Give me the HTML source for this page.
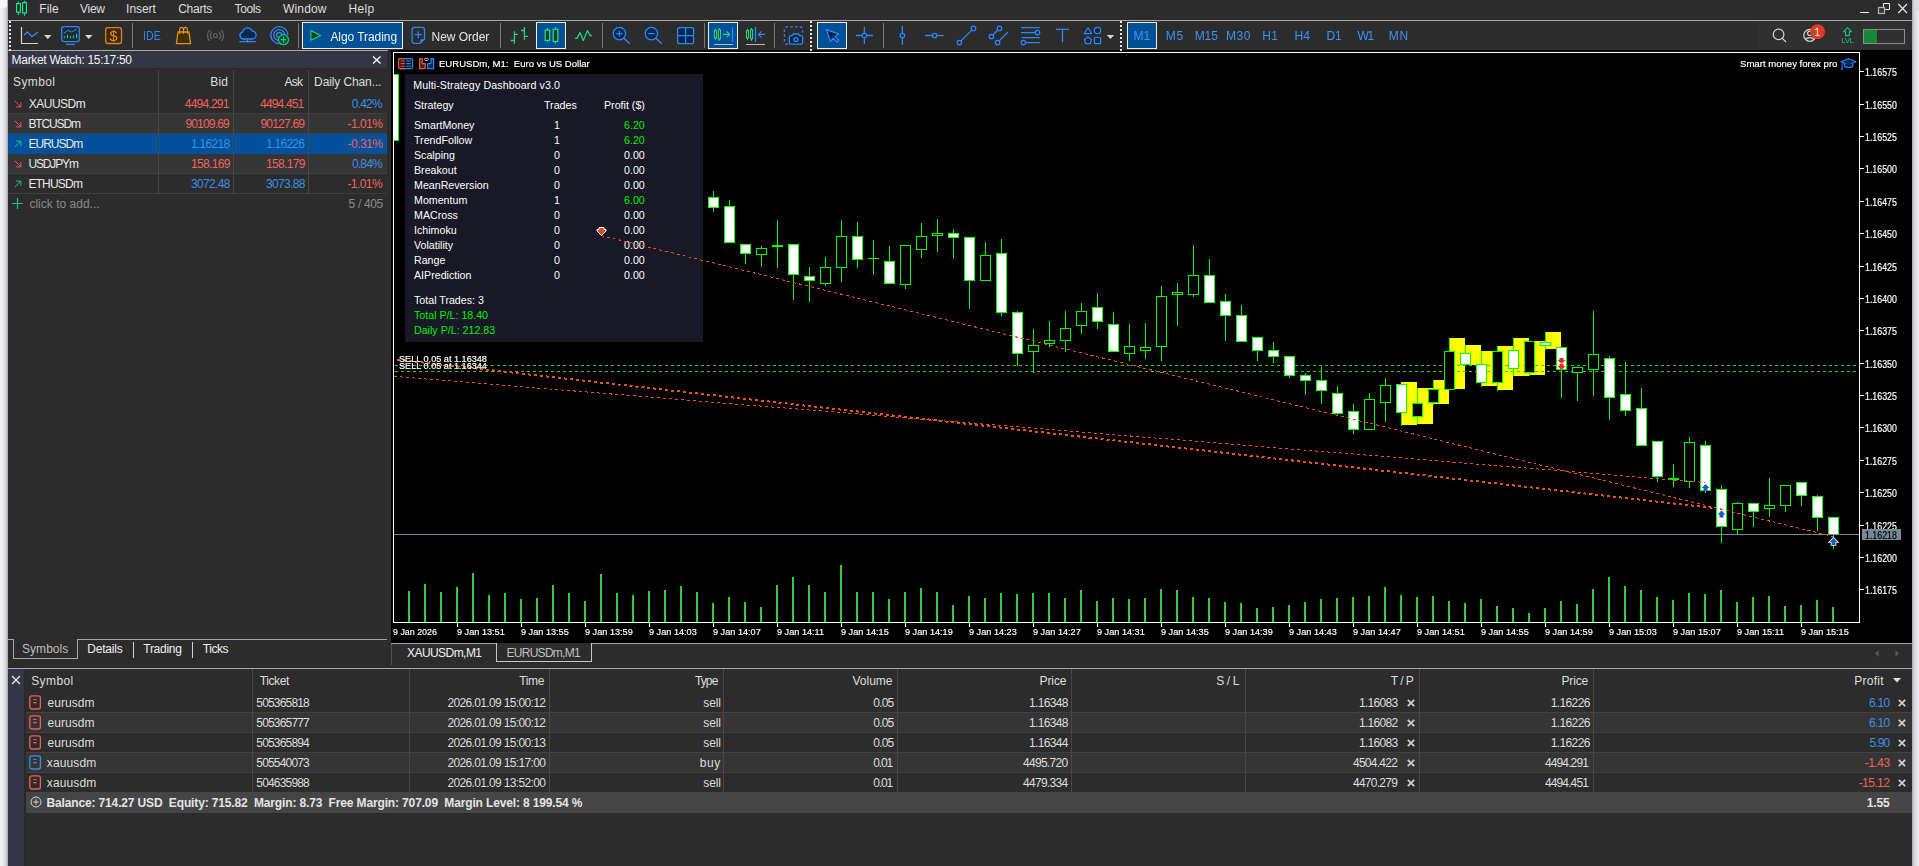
<!DOCTYPE html>
<html><head><meta charset="utf-8"><title>MetaTrader 5</title>
<style>
html,body{margin:0;padding:0;}
body{width:1919px;height:866px;overflow:hidden;position:relative;background:#2c2c2c;font-family:"Liberation Sans",sans-serif;}
svg{position:absolute;overflow:visible;}
</style></head><body>
<div style="position:absolute;left:0px;top:0px;width:8px;height:866px;background:linear-gradient(90deg,#f1f1f5 0%,#ececf0 35%,#d4d4d8 70%,#a9a9ad 100%);"></div>
<div style="position:absolute;left:0px;top:0px;width:7px;height:8px;background:#f6f6f8;border-radius:0 0 3px 0;"></div>
<div style="position:absolute;left:1912px;top:0px;width:7px;height:866px;background:linear-gradient(90deg,#aeaeb2 0%,#d6d6da 35%,#e6e6ea 70%,#ececf0 100%);"></div>
<div style="position:absolute;left:1914px;top:0px;width:5px;height:11px;background:#dcdce0;"></div>
<div style="position:absolute;left:1759px;top:21px;width:153px;height:29px;background:#303030;"></div>
<div style="position:absolute;left:8px;top:20px;width:1904px;height:1px;background:#a8a8a8;"></div>
<div style="position:absolute;top:2.94px;font-size:12px;line-height:12px;color:#dedede;white-space:pre;left:39.3px;">File</div>
<div style="position:absolute;top:2.94px;font-size:12px;line-height:12px;color:#dedede;white-space:pre;letter-spacing:-0.267px;left:80.0px;">View</div>
<div style="position:absolute;top:2.94px;font-size:12px;line-height:12px;color:#dedede;white-space:pre;letter-spacing:-0.04px;left:126.1px;">Insert</div>
<div style="position:absolute;top:2.94px;font-size:12px;line-height:12px;color:#dedede;white-space:pre;letter-spacing:-0.24px;left:178.2px;">Charts</div>
<div style="position:absolute;top:2.94px;font-size:12px;line-height:12px;color:#dedede;white-space:pre;letter-spacing:-0.375px;left:234.5px;">Tools</div>
<div style="position:absolute;top:2.94px;font-size:12px;line-height:12px;color:#dedede;white-space:pre;letter-spacing:0.16px;left:283.0px;">Window</div>
<div style="position:absolute;top:2.94px;font-size:12px;line-height:12px;color:#dedede;white-space:pre;letter-spacing:0.333px;left:348.5px;">Help</div>
<div style="position:absolute;left:8px;top:50px;width:380px;height:1px;background:#a8a8a8;"></div>
<div style="position:absolute;left:8px;top:51px;width:379px;height:17px;background:#333644;"></div>
<div style="position:absolute;top:53.74px;font-size:12px;line-height:12px;color:#f4f4f4;white-space:pre;letter-spacing:-0.314px;left:11.6px;">Market Watch: 15:17:50</div>
<div style="position:absolute;top:76.24px;font-size:12px;line-height:12px;color:#dedede;white-space:pre;letter-spacing:0.4px;left:13.0px;">Symbol</div>
<div style="position:absolute;top:76.24px;font-size:12px;line-height:12px;color:#dedede;white-space:pre;letter-spacing:0.125px;left:210.25px;">Bid</div>
<div style="position:absolute;top:76.24px;font-size:12px;line-height:12px;color:#dedede;white-space:pre;letter-spacing:-0.8px;left:284.5px;">Ask</div>
<div style="position:absolute;top:76.24px;font-size:12px;line-height:12px;color:#dedede;white-space:pre;letter-spacing:-0.113px;left:314.1px;">Daily Chan...</div>
<div style="position:absolute;left:8px;top:113px;width:379px;height:1px;background:#3f3f3f;"></div>
<div style="position:absolute;top:98.24px;font-size:12px;line-height:12px;color:#e8e8e8;white-space:pre;letter-spacing:-0.5px;left:28.75px;">XAUUSDm</div>
<div style="position:absolute;top:98.24px;font-size:12px;line-height:12px;color:#f0625d;white-space:pre;letter-spacing:-0.764px;left:184.75px;">4494.291</div>
<div style="position:absolute;top:98.24px;font-size:12px;line-height:12px;color:#f0625d;white-space:pre;letter-spacing:-0.836px;left:260.1px;">4494.451</div>
<div style="position:absolute;top:98.24px;font-size:12px;line-height:12px;color:#3a8ee6;white-space:pre;letter-spacing:-0.787px;left:351.75px;">0.42%</div>
<svg style="left:14px;top:100px" width="8" height="8" viewBox="0 0 8 8"><path d="M0.9 0.9 L6.6 6.6 M2.2 6.9 H6.9 V2.2" fill="none" stroke="#ff4d5a" stroke-width="1"/></svg>
<div style="position:absolute;left:8px;top:114px;width:379px;height:20px;background:#353535;"></div>
<div style="position:absolute;left:8px;top:133px;width:379px;height:1px;background:#3f3f3f;"></div>
<div style="position:absolute;top:118.24px;font-size:12px;line-height:12px;color:#e8e8e8;white-space:pre;letter-spacing:-1.133px;left:28.4px;">BTCUSDm</div>
<div style="position:absolute;top:118.24px;font-size:12px;line-height:12px;color:#f0625d;white-space:pre;letter-spacing:-0.807px;left:185.4px;">90109.69</div>
<div style="position:absolute;top:118.24px;font-size:12px;line-height:12px;color:#f0625d;white-space:pre;letter-spacing:-0.786px;left:260.4px;">90127.69</div>
<div style="position:absolute;top:118.24px;font-size:12px;line-height:12px;color:#f0625d;white-space:pre;letter-spacing:-0.54px;left:347.6px;">-1.01%</div>
<svg style="left:14px;top:120px" width="8" height="8" viewBox="0 0 8 8"><path d="M0.9 0.9 L6.6 6.6 M2.2 6.9 H6.9 V2.2" fill="none" stroke="#ff4d5a" stroke-width="1"/></svg>
<div style="position:absolute;left:8px;top:134px;width:379px;height:20px;background:#00509a;"></div>
<div style="position:absolute;left:8px;top:153px;width:379px;height:1px;background:#00509a;"></div>
<div style="position:absolute;top:138.24px;font-size:12px;line-height:12px;color:#e8e8e8;white-space:pre;letter-spacing:-0.967px;left:28.4px;">EURUSDm</div>
<div style="position:absolute;top:138.24px;font-size:12px;line-height:12px;color:#3a8ee6;white-space:pre;letter-spacing:-0.692px;left:190.9px;">1.16218</div>
<div style="position:absolute;top:138.24px;font-size:12px;line-height:12px;color:#3a8ee6;white-space:pre;letter-spacing:-0.733px;left:266.0px;">1.16226</div>
<div style="position:absolute;top:138.24px;font-size:12px;line-height:12px;color:#f0625d;white-space:pre;letter-spacing:-0.54px;left:347.6px;">-0.31%</div>
<svg style="left:14px;top:140px" width="8" height="8" viewBox="0 0 8 8"><path d="M0.9 7.1 L6.6 1.4 M2.2 1.1 H6.9 V5.8" fill="none" stroke="#16c784" stroke-width="1"/></svg>
<div style="position:absolute;left:8px;top:154px;width:379px;height:20px;background:#353535;"></div>
<div style="position:absolute;left:8px;top:173px;width:379px;height:1px;background:#3f3f3f;"></div>
<div style="position:absolute;top:158.24px;font-size:12px;line-height:12px;color:#e8e8e8;white-space:pre;letter-spacing:-1.133px;left:28.4px;">USDJPYm</div>
<div style="position:absolute;top:158.24px;font-size:12px;line-height:12px;color:#f0625d;white-space:pre;letter-spacing:-0.667px;left:191.0px;">158.169</div>
<div style="position:absolute;top:158.24px;font-size:12px;line-height:12px;color:#f0625d;white-space:pre;letter-spacing:-0.667px;left:266.0px;">158.179</div>
<div style="position:absolute;top:158.24px;font-size:12px;line-height:12px;color:#3a8ee6;white-space:pre;letter-spacing:-0.85px;left:352.0px;">0.84%</div>
<svg style="left:14px;top:160px" width="8" height="8" viewBox="0 0 8 8"><path d="M0.9 0.9 L6.6 6.6 M2.2 6.9 H6.9 V2.2" fill="none" stroke="#ff4d5a" stroke-width="1"/></svg>
<div style="position:absolute;left:8px;top:193px;width:379px;height:1px;background:#3f3f3f;"></div>
<div style="position:absolute;top:178.24px;font-size:12px;line-height:12px;color:#e8e8e8;white-space:pre;letter-spacing:-0.8px;left:28.4px;">ETHUSDm</div>
<div style="position:absolute;top:178.24px;font-size:12px;line-height:12px;color:#3a8ee6;white-space:pre;letter-spacing:-0.667px;left:191.0px;">3072.48</div>
<div style="position:absolute;top:178.24px;font-size:12px;line-height:12px;color:#3a8ee6;white-space:pre;letter-spacing:-0.667px;left:266.0px;">3073.88</div>
<div style="position:absolute;top:178.24px;font-size:12px;line-height:12px;color:#f0625d;white-space:pre;letter-spacing:-0.56px;left:347.4px;">-1.01%</div>
<svg style="left:14px;top:180px" width="8" height="8" viewBox="0 0 8 8"><path d="M0.9 7.1 L6.6 1.4 M2.2 1.1 H6.9 V5.8" fill="none" stroke="#16c784" stroke-width="1"/></svg>
<div style="position:absolute;left:158px;top:70px;width:1px;height:124px;background:#474747;"></div>
<div style="position:absolute;left:233px;top:70px;width:1px;height:124px;background:#474747;"></div>
<div style="position:absolute;left:308px;top:70px;width:1px;height:124px;background:#474747;"></div>
<svg style="left:12px;top:198px" width="11" height="11" viewBox="0 0 11 11"><path d="M5.5 0 V11 M0 5.5 H11" stroke="#16c784" stroke-width="1.2"/></svg>
<div style="position:absolute;top:197.64px;font-size:12px;line-height:12px;color:#8a8a8a;white-space:pre;letter-spacing:0.014px;left:29.4px;">click to add...</div>
<div style="position:absolute;top:197.64px;font-size:12px;line-height:12px;color:#8a8a8a;white-space:pre;letter-spacing:-0.333px;left:348.6px;">5 / 405</div>
<div style="position:absolute;left:8px;top:639px;width:379px;height:1px;background:#a8a8a8;"></div>
<div style="position:absolute;left:13px;top:639px;width:65px;height:1px;background:#2c2c2c;"></div>
<div style="position:absolute;left:13px;top:639px;width:1px;height:20px;background:#a8a8a8;"></div>
<div style="position:absolute;left:77px;top:639px;width:1px;height:20px;background:#a8a8a8;"></div>
<div style="position:absolute;left:13px;top:658px;width:65px;height:1px;background:#a8a8a8;"></div>
<div style="position:absolute;top:642.84px;font-size:12px;line-height:12px;color:#bdbdbd;white-space:pre;letter-spacing:0.05px;left:22.0px;">Symbols</div>
<div style="position:absolute;top:642.84px;font-size:12px;line-height:12px;color:#f0f0f0;white-space:pre;letter-spacing:-0.2px;left:87.2px;">Details</div>
<div style="position:absolute;top:642.84px;font-size:12px;line-height:12px;color:#f0f0f0;white-space:pre;letter-spacing:-0.283px;left:143.3px;">Trading</div>
<div style="position:absolute;top:642.84px;font-size:12px;line-height:12px;color:#f0f0f0;white-space:pre;letter-spacing:-0.45px;left:202.8px;">Ticks</div>
<div style="position:absolute;left:133px;top:642px;width:1px;height:16px;background:#d0d0d0;"></div>
<div style="position:absolute;left:192px;top:642px;width:1px;height:16px;background:#d0d0d0;"></div>
<div style="position:absolute;left:391px;top:643px;width:1521px;height:1px;background:#a8a8a8;"></div>
<div style="position:absolute;left:391px;top:644px;width:1px;height:21px;background:#4e4e4e;"></div>
<div style="position:absolute;left:496px;top:643px;width:96px;height:1px;background:#2c2c2c;"></div>
<div style="position:absolute;left:496px;top:643px;width:1px;height:19px;background:#c8c8c8;"></div>
<div style="position:absolute;left:591px;top:643px;width:1px;height:19px;background:#c8c8c8;"></div>
<div style="position:absolute;left:496px;top:661px;width:96px;height:1px;background:#c8c8c8;"></div>
<div style="position:absolute;top:647.34px;font-size:12px;line-height:12px;color:#f2f2f2;white-space:pre;letter-spacing:-0.556px;left:407.0px;">XAUUSDm,M1</div>
<div style="position:absolute;top:646.64px;font-size:12px;line-height:12px;color:#c0c0c0;white-space:pre;letter-spacing:-0.722px;left:506.5px;">EURUSDm,M1</div>
<svg style="left:1873px;top:649px" width="30" height="9" viewBox="0 0 30 9"><path d="M5.5 1 L2 4.5 L5.5 8 Z M22.5 1 L26 4.5 L22.5 8 Z" fill="#5a5a5a"/></svg>
<div style="position:absolute;left:8px;top:668px;width:1904px;height:1px;background:#a8a8a8;"></div>
<div style="position:absolute;left:8px;top:669px;width:16px;height:197px;background:#333644;"></div>
<div style="position:absolute;left:24px;top:669px;width:2px;height:197px;background:#292929;"></div>
<svg style="left:11px;top:675px" width="10" height="10" viewBox="0 0 10 10"><path d="M1 1 L9 9 M9 1 L1 9" stroke="#f4f4f4" stroke-width="1.3"/></svg>
<div style="position:absolute;top:675.14px;font-size:12px;line-height:12px;color:#dedede;white-space:pre;letter-spacing:0.4px;left:31.2px;">Symbol</div>
<div style="position:absolute;top:675.14px;font-size:12px;line-height:12px;color:#dedede;white-space:pre;letter-spacing:-0.4px;left:259.7px;">Ticket</div>
<div style="position:absolute;top:675.14px;font-size:12px;line-height:12px;color:#dedede;white-space:pre;letter-spacing:-0.333px;left:519.2px;">Time</div>
<div style="position:absolute;top:675.14px;font-size:12px;line-height:12px;color:#dedede;white-space:pre;letter-spacing:-0.9px;left:695.0px;">Type</div>
<div style="position:absolute;top:675.14px;font-size:12px;line-height:12px;color:#dedede;white-space:pre;left:852.5px;">Volume</div>
<div style="position:absolute;top:675.14px;font-size:12px;line-height:12px;color:#dedede;white-space:pre;letter-spacing:-0.075px;left:1039.5px;">Price</div>
<div style="position:absolute;top:675.14px;font-size:12px;line-height:12px;color:#dedede;white-space:pre;letter-spacing:-0.375px;left:1216.2px;">S / L</div>
<div style="position:absolute;top:675.14px;font-size:12px;line-height:12px;color:#dedede;white-space:pre;letter-spacing:-0.525px;left:1390.8px;">T / P</div>
<div style="position:absolute;top:675.14px;font-size:12px;line-height:12px;color:#dedede;white-space:pre;letter-spacing:-0.175px;left:1561.5px;">Price</div>
<div style="position:absolute;top:675.14px;font-size:12px;line-height:12px;color:#dedede;white-space:pre;letter-spacing:0.24px;left:1854.3px;">Profit</div>
<svg style="left:1893px;top:678px" width="8" height="5" viewBox="0 0 8 5"><path d="M0 0 H8 L4 4.5 Z" fill="#e0e0e0"/></svg>
<div style="position:absolute;left:26px;top:712px;width:1886px;height:1px;background:#424242;"></div>
<svg style="left:29px;top:695px" width="13" height="15" viewBox="0 0 13 15"><rect x="0.8" y="0.8" width="10.6" height="13.2" rx="2" fill="none" stroke="#f25c5c" stroke-width="1.3"/><path d="M4.2 4.5 H7.6 M4.2 7.6 H7.6" stroke="#f25c5c" stroke-width="1.2"/></svg>
<div style="position:absolute;top:696.54px;font-size:12px;line-height:12px;color:#dedede;white-space:pre;letter-spacing:0.05px;left:47.5px;">eurusdm</div>
<div style="position:absolute;top:696.54px;font-size:12px;line-height:12px;color:#dedede;white-space:pre;letter-spacing:-0.825px;left:256.3px;">505365818</div>
<div style="position:absolute;top:696.54px;font-size:12px;line-height:12px;color:#dedede;white-space:pre;letter-spacing:-0.65px;left:447.5px;">2026.01.09 15:00:12</div>
<div style="position:absolute;top:696.54px;font-size:12px;line-height:12px;color:#dedede;white-space:pre;letter-spacing:-0.1px;left:703.3px;">sell</div>
<div style="position:absolute;top:696.54px;font-size:12px;line-height:12px;color:#dedede;white-space:pre;letter-spacing:-0.833px;left:873.3px;">0.05</div>
<div style="position:absolute;top:696.54px;font-size:12px;line-height:12px;color:#dedede;white-space:pre;letter-spacing:-0.667px;left:1029.0px;">1.16348</div>
<div style="position:absolute;top:696.54px;font-size:12px;line-height:12px;color:#dedede;white-space:pre;letter-spacing:-0.7px;left:1359.0px;">1.16083</div>
<svg style="left:1406.5px;top:698.5px" width="8" height="8" viewBox="0 0 8 8"><path d="M0.8 0.8 L7.2 7.2 M7.2 0.8 L0.8 7.2" stroke="#d2d2d2" stroke-width="1.7"/></svg>
<div style="position:absolute;top:696.54px;font-size:12px;line-height:12px;color:#dedede;white-space:pre;letter-spacing:-0.617px;left:1550.7px;">1.16226</div>
<div style="position:absolute;top:696.54px;font-size:12px;line-height:12px;color:#3a8ee6;white-space:pre;letter-spacing:-0.733px;left:1869.0px;">6.10</div>
<svg style="left:1898px;top:698.5px" width="8" height="8" viewBox="0 0 8 8"><path d="M0.8 0.8 L7.2 7.2 M7.2 0.8 L0.8 7.2" stroke="#d2d2d2" stroke-width="1.7"/></svg>
<div style="position:absolute;left:26px;top:713px;width:1886px;height:19px;background:#353535;"></div>
<div style="position:absolute;left:26px;top:732px;width:1886px;height:1px;background:#424242;"></div>
<svg style="left:29px;top:715px" width="13" height="15" viewBox="0 0 13 15"><rect x="0.8" y="0.8" width="10.6" height="13.2" rx="2" fill="none" stroke="#f25c5c" stroke-width="1.3"/><path d="M4.2 4.5 H7.6 M4.2 7.6 H7.6" stroke="#f25c5c" stroke-width="1.2"/></svg>
<div style="position:absolute;top:716.54px;font-size:12px;line-height:12px;color:#dedede;white-space:pre;letter-spacing:0.05px;left:47.5px;">eurusdm</div>
<div style="position:absolute;top:716.54px;font-size:12px;line-height:12px;color:#dedede;white-space:pre;letter-spacing:-0.825px;left:256.3px;">505365777</div>
<div style="position:absolute;top:716.54px;font-size:12px;line-height:12px;color:#dedede;white-space:pre;letter-spacing:-0.65px;left:447.5px;">2026.01.09 15:00:12</div>
<div style="position:absolute;top:716.54px;font-size:12px;line-height:12px;color:#dedede;white-space:pre;letter-spacing:-0.1px;left:703.3px;">sell</div>
<div style="position:absolute;top:716.54px;font-size:12px;line-height:12px;color:#dedede;white-space:pre;letter-spacing:-0.833px;left:873.3px;">0.05</div>
<div style="position:absolute;top:716.54px;font-size:12px;line-height:12px;color:#dedede;white-space:pre;letter-spacing:-0.667px;left:1029.0px;">1.16348</div>
<div style="position:absolute;top:716.54px;font-size:12px;line-height:12px;color:#dedede;white-space:pre;letter-spacing:-0.7px;left:1359.0px;">1.16082</div>
<svg style="left:1406.5px;top:718.5px" width="8" height="8" viewBox="0 0 8 8"><path d="M0.8 0.8 L7.2 7.2 M7.2 0.8 L0.8 7.2" stroke="#d2d2d2" stroke-width="1.7"/></svg>
<div style="position:absolute;top:716.54px;font-size:12px;line-height:12px;color:#dedede;white-space:pre;letter-spacing:-0.617px;left:1550.7px;">1.16226</div>
<div style="position:absolute;top:716.54px;font-size:12px;line-height:12px;color:#3a8ee6;white-space:pre;letter-spacing:-0.733px;left:1869.0px;">6.10</div>
<svg style="left:1898px;top:718.5px" width="8" height="8" viewBox="0 0 8 8"><path d="M0.8 0.8 L7.2 7.2 M7.2 0.8 L0.8 7.2" stroke="#d2d2d2" stroke-width="1.7"/></svg>
<div style="position:absolute;left:26px;top:752px;width:1886px;height:1px;background:#424242;"></div>
<svg style="left:29px;top:735px" width="13" height="15" viewBox="0 0 13 15"><rect x="0.8" y="0.8" width="10.6" height="13.2" rx="2" fill="none" stroke="#f25c5c" stroke-width="1.3"/><path d="M4.2 4.5 H7.6 M4.2 7.6 H7.6" stroke="#f25c5c" stroke-width="1.2"/></svg>
<div style="position:absolute;top:736.54px;font-size:12px;line-height:12px;color:#dedede;white-space:pre;letter-spacing:0.05px;left:47.5px;">eurusdm</div>
<div style="position:absolute;top:736.54px;font-size:12px;line-height:12px;color:#dedede;white-space:pre;letter-spacing:-0.825px;left:256.3px;">505365894</div>
<div style="position:absolute;top:736.54px;font-size:12px;line-height:12px;color:#dedede;white-space:pre;letter-spacing:-0.65px;left:447.5px;">2026.01.09 15:00:13</div>
<div style="position:absolute;top:736.54px;font-size:12px;line-height:12px;color:#dedede;white-space:pre;letter-spacing:-0.1px;left:703.3px;">sell</div>
<div style="position:absolute;top:736.54px;font-size:12px;line-height:12px;color:#dedede;white-space:pre;letter-spacing:-0.833px;left:873.3px;">0.05</div>
<div style="position:absolute;top:736.54px;font-size:12px;line-height:12px;color:#dedede;white-space:pre;letter-spacing:-0.667px;left:1029.0px;">1.16344</div>
<div style="position:absolute;top:736.54px;font-size:12px;line-height:12px;color:#dedede;white-space:pre;letter-spacing:-0.7px;left:1359.0px;">1.16083</div>
<svg style="left:1406.5px;top:738.5px" width="8" height="8" viewBox="0 0 8 8"><path d="M0.8 0.8 L7.2 7.2 M7.2 0.8 L0.8 7.2" stroke="#d2d2d2" stroke-width="1.7"/></svg>
<div style="position:absolute;top:736.54px;font-size:12px;line-height:12px;color:#dedede;white-space:pre;letter-spacing:-0.617px;left:1550.7px;">1.16226</div>
<div style="position:absolute;top:736.54px;font-size:12px;line-height:12px;color:#3a8ee6;white-space:pre;letter-spacing:-0.9px;left:1869.5px;">5.90</div>
<svg style="left:1898px;top:738.5px" width="8" height="8" viewBox="0 0 8 8"><path d="M0.8 0.8 L7.2 7.2 M7.2 0.8 L0.8 7.2" stroke="#d2d2d2" stroke-width="1.7"/></svg>
<div style="position:absolute;left:26px;top:753px;width:1886px;height:19px;background:#353535;"></div>
<div style="position:absolute;left:26px;top:772px;width:1886px;height:1px;background:#424242;"></div>
<svg style="left:29px;top:755px" width="13" height="15" viewBox="0 0 13 15"><rect x="0.8" y="0.8" width="10.6" height="13.2" rx="2" fill="none" stroke="#3a8ee6" stroke-width="1.3"/><path d="M4.2 4.5 H7.6 M4.2 7.6 H7.6" stroke="#3a8ee6" stroke-width="1.2"/></svg>
<div style="position:absolute;top:756.54px;font-size:12px;line-height:12px;color:#dedede;white-space:pre;letter-spacing:0.117px;left:46.8px;">xauusdm</div>
<div style="position:absolute;top:756.54px;font-size:12px;line-height:12px;color:#dedede;white-space:pre;letter-spacing:-0.825px;left:256.3px;">505540073</div>
<div style="position:absolute;top:756.54px;font-size:12px;line-height:12px;color:#dedede;white-space:pre;letter-spacing:-0.65px;left:447.5px;">2026.01.09 15:17:00</div>
<div style="position:absolute;top:756.54px;font-size:12px;line-height:12px;color:#dedede;white-space:pre;letter-spacing:0.6px;left:699.8px;">buy</div>
<div style="position:absolute;top:756.54px;font-size:12px;line-height:12px;color:#dedede;white-space:pre;letter-spacing:-1.167px;left:873.3px;">0.01</div>
<div style="position:absolute;top:756.54px;font-size:12px;line-height:12px;color:#dedede;white-space:pre;letter-spacing:-0.714px;left:1023.0px;">4495.720</div>
<div style="position:absolute;top:756.54px;font-size:12px;line-height:12px;color:#dedede;white-space:pre;letter-spacing:-0.743px;left:1353.0px;">4504.422</div>
<svg style="left:1406.5px;top:758.5px" width="8" height="8" viewBox="0 0 8 8"><path d="M0.8 0.8 L7.2 7.2 M7.2 0.8 L0.8 7.2" stroke="#d2d2d2" stroke-width="1.7"/></svg>
<div style="position:absolute;top:756.54px;font-size:12px;line-height:12px;color:#dedede;white-space:pre;letter-spacing:-0.886px;left:1545.0px;">4494.291</div>
<div style="position:absolute;top:756.54px;font-size:12px;line-height:12px;color:#f0625d;white-space:pre;letter-spacing:-0.5px;left:1864.8px;">-1.43</div>
<svg style="left:1898px;top:758.5px" width="8" height="8" viewBox="0 0 8 8"><path d="M0.8 0.8 L7.2 7.2 M7.2 0.8 L0.8 7.2" stroke="#d2d2d2" stroke-width="1.7"/></svg>
<div style="position:absolute;left:26px;top:792px;width:1886px;height:1px;background:#424242;"></div>
<svg style="left:29px;top:775px" width="13" height="15" viewBox="0 0 13 15"><rect x="0.8" y="0.8" width="10.6" height="13.2" rx="2" fill="none" stroke="#f25c5c" stroke-width="1.3"/><path d="M4.2 4.5 H7.6 M4.2 7.6 H7.6" stroke="#f25c5c" stroke-width="1.2"/></svg>
<div style="position:absolute;top:776.54px;font-size:12px;line-height:12px;color:#dedede;white-space:pre;letter-spacing:0.117px;left:46.8px;">xauusdm</div>
<div style="position:absolute;top:776.54px;font-size:12px;line-height:12px;color:#dedede;white-space:pre;letter-spacing:-0.825px;left:256.3px;">504635988</div>
<div style="position:absolute;top:776.54px;font-size:12px;line-height:12px;color:#dedede;white-space:pre;letter-spacing:-0.65px;left:447.5px;">2026.01.09 13:52:00</div>
<div style="position:absolute;top:776.54px;font-size:12px;line-height:12px;color:#dedede;white-space:pre;letter-spacing:-0.1px;left:703.3px;">sell</div>
<div style="position:absolute;top:776.54px;font-size:12px;line-height:12px;color:#dedede;white-space:pre;letter-spacing:-1.167px;left:873.3px;">0.01</div>
<div style="position:absolute;top:776.54px;font-size:12px;line-height:12px;color:#dedede;white-space:pre;letter-spacing:-0.714px;left:1023.0px;">4479.334</div>
<div style="position:absolute;top:776.54px;font-size:12px;line-height:12px;color:#dedede;white-space:pre;letter-spacing:-0.743px;left:1353.0px;">4470.279</div>
<svg style="left:1406.5px;top:778.5px" width="8" height="8" viewBox="0 0 8 8"><path d="M0.8 0.8 L7.2 7.2 M7.2 0.8 L0.8 7.2" stroke="#d2d2d2" stroke-width="1.7"/></svg>
<div style="position:absolute;top:776.54px;font-size:12px;line-height:12px;color:#dedede;white-space:pre;letter-spacing:-0.886px;left:1545.0px;">4494.451</div>
<div style="position:absolute;top:776.54px;font-size:12px;line-height:12px;color:#f0625d;white-space:pre;letter-spacing:-0.58px;left:1858.7px;">-15.12</div>
<svg style="left:1898px;top:778.5px" width="8" height="8" viewBox="0 0 8 8"><path d="M0.8 0.8 L7.2 7.2 M7.2 0.8 L0.8 7.2" stroke="#d2d2d2" stroke-width="1.7"/></svg>
<div style="position:absolute;left:252px;top:669px;width:1px;height:123px;background:#474747;"></div>
<div style="position:absolute;left:409px;top:669px;width:1px;height:123px;background:#474747;"></div>
<div style="position:absolute;left:549px;top:669px;width:1px;height:123px;background:#474747;"></div>
<div style="position:absolute;left:723px;top:669px;width:1px;height:123px;background:#474747;"></div>
<div style="position:absolute;left:897px;top:669px;width:1px;height:123px;background:#474747;"></div>
<div style="position:absolute;left:1071px;top:669px;width:1px;height:123px;background:#474747;"></div>
<div style="position:absolute;left:1245px;top:669px;width:1px;height:123px;background:#474747;"></div>
<div style="position:absolute;left:1419px;top:669px;width:1px;height:123px;background:#474747;"></div>
<div style="position:absolute;left:1593px;top:669px;width:1px;height:123px;background:#474747;"></div>
<div style="position:absolute;left:26px;top:792px;width:1886px;height:21px;background:#454545;"></div>
<svg style="left:29.6px;top:796.4px" width="12" height="12" viewBox="0 0 12 12"><circle cx="6" cy="6" r="5" fill="none" stroke="#d8d8d8" stroke-width="1"/><path d="M6 3.3 V8.7 M3.3 6 H8.7" stroke="#d8d8d8" stroke-width="1"/></svg>
<div style="position:absolute;top:796.84px;font-size:12px;line-height:12px;color:#e4e4e4;white-space:pre;font-weight:bold;letter-spacing:-0.144px;left:46.5px;">Balance: 714.27 USD  Equity: 715.82  Margin: 8.73  Free Margin: 707.09  Margin Level: 8 199.54 %</div>
<div style="position:absolute;top:796.84px;font-size:12px;line-height:12px;color:#e4e4e4;white-space:pre;font-weight:bold;letter-spacing:-0.167px;left:1866.8px;">1.55</div>
<div style="position:absolute;left:0;top:0;width:1919px;height:866px;will-change:transform;-webkit-text-stroke:0.18px currentColor">
<div style="position:absolute;left:391px;top:50px;width:1521px;height:593px;background:#000;"></div>
<div style="position:absolute;top:67.97px;font-size:10.2px;line-height:10.2px;color:#fff;white-space:pre;left:1864.93px;transform:scaleX(0.8667);transform-origin:0 0;">1.16575</div>
<div style="position:absolute;top:100.97px;font-size:10.2px;line-height:10.2px;color:#fff;white-space:pre;left:1864.93px;transform:scaleX(0.8667);transform-origin:0 0;">1.16550</div>
<div style="position:absolute;top:132.97px;font-size:10.2px;line-height:10.2px;color:#fff;white-space:pre;left:1864.93px;transform:scaleX(0.8667);transform-origin:0 0;">1.16525</div>
<div style="position:absolute;top:164.97px;font-size:10.2px;line-height:10.2px;color:#fff;white-space:pre;left:1864.93px;transform:scaleX(0.8667);transform-origin:0 0;">1.16500</div>
<div style="position:absolute;top:197.97px;font-size:10.2px;line-height:10.2px;color:#fff;white-space:pre;left:1864.93px;transform:scaleX(0.8667);transform-origin:0 0;">1.16475</div>
<div style="position:absolute;top:229.97px;font-size:10.2px;line-height:10.2px;color:#fff;white-space:pre;left:1864.93px;transform:scaleX(0.8667);transform-origin:0 0;">1.16450</div>
<div style="position:absolute;top:262.97px;font-size:10.2px;line-height:10.2px;color:#fff;white-space:pre;left:1864.93px;transform:scaleX(0.8667);transform-origin:0 0;">1.16425</div>
<div style="position:absolute;top:294.97px;font-size:10.2px;line-height:10.2px;color:#fff;white-space:pre;left:1864.93px;transform:scaleX(0.8667);transform-origin:0 0;">1.16400</div>
<div style="position:absolute;top:326.97px;font-size:10.2px;line-height:10.2px;color:#fff;white-space:pre;left:1864.93px;transform:scaleX(0.8667);transform-origin:0 0;">1.16375</div>
<div style="position:absolute;top:359.97px;font-size:10.2px;line-height:10.2px;color:#fff;white-space:pre;left:1864.93px;transform:scaleX(0.8667);transform-origin:0 0;">1.16350</div>
<div style="position:absolute;top:391.97px;font-size:10.2px;line-height:10.2px;color:#fff;white-space:pre;left:1864.93px;transform:scaleX(0.8667);transform-origin:0 0;">1.16325</div>
<div style="position:absolute;top:423.97px;font-size:10.2px;line-height:10.2px;color:#fff;white-space:pre;left:1864.93px;transform:scaleX(0.8667);transform-origin:0 0;">1.16300</div>
<div style="position:absolute;top:456.97px;font-size:10.2px;line-height:10.2px;color:#fff;white-space:pre;left:1864.93px;transform:scaleX(0.8667);transform-origin:0 0;">1.16275</div>
<div style="position:absolute;top:488.97px;font-size:10.2px;line-height:10.2px;color:#fff;white-space:pre;left:1864.93px;transform:scaleX(0.8667);transform-origin:0 0;">1.16250</div>
<div style="position:absolute;top:521.97px;font-size:10.2px;line-height:10.2px;color:#fff;white-space:pre;left:1864.93px;transform:scaleX(0.8667);transform-origin:0 0;">1.16225</div>
<div style="position:absolute;top:553.97px;font-size:10.2px;line-height:10.2px;color:#fff;white-space:pre;left:1864.93px;transform:scaleX(0.8667);transform-origin:0 0;">1.16200</div>
<div style="position:absolute;top:585.97px;font-size:10.2px;line-height:10.2px;color:#fff;white-space:pre;left:1864.93px;transform:scaleX(0.8667);transform-origin:0 0;">1.16175</div>
<div style="position:absolute;top:626.72px;font-size:9.9px;line-height:9.9px;color:#fff;white-space:pre;left:393.0px;transform:scaleX(0.898);transform-origin:0 0;">9 Jan 2026</div>
<div style="position:absolute;top:626.72px;font-size:9.9px;line-height:9.9px;color:#fff;white-space:pre;left:457.0px;transform:scaleX(0.9255);transform-origin:0 0;">9 Jan 13:51</div>
<div style="position:absolute;top:626.72px;font-size:9.9px;line-height:9.9px;color:#fff;white-space:pre;left:521.0px;transform:scaleX(0.9255);transform-origin:0 0;">9 Jan 13:55</div>
<div style="position:absolute;top:626.72px;font-size:9.9px;line-height:9.9px;color:#fff;white-space:pre;left:585.0px;transform:scaleX(0.9255);transform-origin:0 0;">9 Jan 13:59</div>
<div style="position:absolute;top:626.72px;font-size:9.9px;line-height:9.9px;color:#fff;white-space:pre;left:649.0px;transform:scaleX(0.9255);transform-origin:0 0;">9 Jan 14:03</div>
<div style="position:absolute;top:626.72px;font-size:9.9px;line-height:9.9px;color:#fff;white-space:pre;left:713.0px;transform:scaleX(0.9255);transform-origin:0 0;">9 Jan 14:07</div>
<div style="position:absolute;top:626.72px;font-size:9.9px;line-height:9.9px;color:#fff;white-space:pre;left:777.0px;transform:scaleX(0.9255);transform-origin:0 0;">9 Jan 14:11</div>
<div style="position:absolute;top:626.72px;font-size:9.9px;line-height:9.9px;color:#fff;white-space:pre;left:841.0px;transform:scaleX(0.9255);transform-origin:0 0;">9 Jan 14:15</div>
<div style="position:absolute;top:626.72px;font-size:9.9px;line-height:9.9px;color:#fff;white-space:pre;left:905.0px;transform:scaleX(0.9255);transform-origin:0 0;">9 Jan 14:19</div>
<div style="position:absolute;top:626.72px;font-size:9.9px;line-height:9.9px;color:#fff;white-space:pre;left:969.0px;transform:scaleX(0.9255);transform-origin:0 0;">9 Jan 14:23</div>
<div style="position:absolute;top:626.72px;font-size:9.9px;line-height:9.9px;color:#fff;white-space:pre;left:1033.0px;transform:scaleX(0.9255);transform-origin:0 0;">9 Jan 14:27</div>
<div style="position:absolute;top:626.72px;font-size:9.9px;line-height:9.9px;color:#fff;white-space:pre;left:1097.0px;transform:scaleX(0.9255);transform-origin:0 0;">9 Jan 14:31</div>
<div style="position:absolute;top:626.72px;font-size:9.9px;line-height:9.9px;color:#fff;white-space:pre;left:1161.0px;transform:scaleX(0.9255);transform-origin:0 0;">9 Jan 14:35</div>
<div style="position:absolute;top:626.72px;font-size:9.9px;line-height:9.9px;color:#fff;white-space:pre;left:1225.0px;transform:scaleX(0.9255);transform-origin:0 0;">9 Jan 14:39</div>
<div style="position:absolute;top:626.72px;font-size:9.9px;line-height:9.9px;color:#fff;white-space:pre;left:1289.0px;transform:scaleX(0.9255);transform-origin:0 0;">9 Jan 14:43</div>
<div style="position:absolute;top:626.72px;font-size:9.9px;line-height:9.9px;color:#fff;white-space:pre;left:1353.0px;transform:scaleX(0.9255);transform-origin:0 0;">9 Jan 14:47</div>
<div style="position:absolute;top:626.72px;font-size:9.9px;line-height:9.9px;color:#fff;white-space:pre;left:1417.0px;transform:scaleX(0.9255);transform-origin:0 0;">9 Jan 14:51</div>
<div style="position:absolute;top:626.72px;font-size:9.9px;line-height:9.9px;color:#fff;white-space:pre;left:1481.0px;transform:scaleX(0.9255);transform-origin:0 0;">9 Jan 14:55</div>
<div style="position:absolute;top:626.72px;font-size:9.9px;line-height:9.9px;color:#fff;white-space:pre;left:1545.0px;transform:scaleX(0.9255);transform-origin:0 0;">9 Jan 14:59</div>
<div style="position:absolute;top:626.72px;font-size:9.9px;line-height:9.9px;color:#fff;white-space:pre;left:1609.0px;transform:scaleX(0.9255);transform-origin:0 0;">9 Jan 15:03</div>
<div style="position:absolute;top:626.72px;font-size:9.9px;line-height:9.9px;color:#fff;white-space:pre;left:1673.0px;transform:scaleX(0.9255);transform-origin:0 0;">9 Jan 15:07</div>
<div style="position:absolute;top:626.72px;font-size:9.9px;line-height:9.9px;color:#fff;white-space:pre;left:1737.0px;transform:scaleX(0.9255);transform-origin:0 0;">9 Jan 15:11</div>
<div style="position:absolute;top:626.72px;font-size:9.9px;line-height:9.9px;color:#fff;white-space:pre;left:1801.0px;transform:scaleX(0.9255);transform-origin:0 0;">9 Jan 15:15</div>
<svg style="left:0;top:0" width="1919" height="866" viewBox="0 0 1919 866" shape-rendering="crispEdges"><rect x="393" y="52" width="1467" height="1" fill="#fff"/><rect x="393" y="52" width="1" height="571" fill="#fff"/><rect x="393" y="622" width="1467" height="1" fill="#fff"/><rect x="1859" y="52" width="1" height="571" fill="#fff"/><rect x="1860" y="71" width="4" height="1" fill="#fff"/><rect x="1860" y="104" width="4" height="1" fill="#fff"/><rect x="1860" y="136" width="4" height="1" fill="#fff"/><rect x="1860" y="168" width="4" height="1" fill="#fff"/><rect x="1860" y="201" width="4" height="1" fill="#fff"/><rect x="1860" y="233" width="4" height="1" fill="#fff"/><rect x="1860" y="266" width="4" height="1" fill="#fff"/><rect x="1860" y="298" width="4" height="1" fill="#fff"/><rect x="1860" y="330" width="4" height="1" fill="#fff"/><rect x="1860" y="363" width="4" height="1" fill="#fff"/><rect x="1860" y="395" width="4" height="1" fill="#fff"/><rect x="1860" y="427" width="4" height="1" fill="#fff"/><rect x="1860" y="460" width="4" height="1" fill="#fff"/><rect x="1860" y="492" width="4" height="1" fill="#fff"/><rect x="1860" y="525" width="4" height="1" fill="#fff"/><rect x="1860" y="557" width="4" height="1" fill="#fff"/><rect x="1860" y="589" width="4" height="1" fill="#fff"/><rect x="457" y="623" width="1" height="4" fill="#fff"/><rect x="521" y="623" width="1" height="4" fill="#fff"/><rect x="585" y="623" width="1" height="4" fill="#fff"/><rect x="649" y="623" width="1" height="4" fill="#fff"/><rect x="713" y="623" width="1" height="4" fill="#fff"/><rect x="777" y="623" width="1" height="4" fill="#fff"/><rect x="841" y="623" width="1" height="4" fill="#fff"/><rect x="905" y="623" width="1" height="4" fill="#fff"/><rect x="969" y="623" width="1" height="4" fill="#fff"/><rect x="1033" y="623" width="1" height="4" fill="#fff"/><rect x="1097" y="623" width="1" height="4" fill="#fff"/><rect x="1161" y="623" width="1" height="4" fill="#fff"/><rect x="1225" y="623" width="1" height="4" fill="#fff"/><rect x="1289" y="623" width="1" height="4" fill="#fff"/><rect x="1353" y="623" width="1" height="4" fill="#fff"/><rect x="1417" y="623" width="1" height="4" fill="#fff"/><rect x="1481" y="623" width="1" height="4" fill="#fff"/><rect x="1545" y="623" width="1" height="4" fill="#fff"/><rect x="1609" y="623" width="1" height="4" fill="#fff"/><rect x="1673" y="623" width="1" height="4" fill="#fff"/><rect x="1737" y="623" width="1" height="4" fill="#fff"/><rect x="1801" y="623" width="1" height="4" fill="#fff"/><rect x="408" y="591" width="2" height="31" fill="#32cd32"/><rect x="424" y="584" width="2" height="38" fill="#32cd32"/><rect x="440" y="592" width="2" height="30" fill="#32cd32"/><rect x="456" y="587" width="2" height="35" fill="#32cd32"/><rect x="472" y="573" width="2" height="49" fill="#32cd32"/><rect x="488" y="595" width="2" height="27" fill="#32cd32"/><rect x="504" y="593" width="2" height="29" fill="#32cd32"/><rect x="520" y="599" width="2" height="23" fill="#32cd32"/><rect x="536" y="598" width="2" height="24" fill="#32cd32"/><rect x="552" y="585" width="2" height="37" fill="#32cd32"/><rect x="568" y="593" width="2" height="29" fill="#32cd32"/><rect x="584" y="601" width="2" height="21" fill="#32cd32"/><rect x="600" y="574" width="2" height="48" fill="#32cd32"/><rect x="616" y="593" width="2" height="29" fill="#32cd32"/><rect x="632" y="595" width="2" height="27" fill="#32cd32"/><rect x="648" y="591" width="2" height="31" fill="#32cd32"/><rect x="664" y="590" width="2" height="32" fill="#32cd32"/><rect x="680" y="586" width="2" height="36" fill="#32cd32"/><rect x="696" y="592" width="2" height="30" fill="#32cd32"/><rect x="712" y="603" width="2" height="19" fill="#32cd32"/><rect x="728" y="597" width="2" height="25" fill="#32cd32"/><rect x="744" y="602" width="2" height="20" fill="#32cd32"/><rect x="760" y="607" width="2" height="15" fill="#32cd32"/><rect x="776" y="585" width="2" height="37" fill="#32cd32"/><rect x="792" y="577" width="2" height="45" fill="#32cd32"/><rect x="808" y="585" width="2" height="37" fill="#32cd32"/><rect x="824" y="592" width="2" height="30" fill="#32cd32"/><rect x="840" y="565" width="2" height="57" fill="#32cd32"/><rect x="856" y="592" width="2" height="30" fill="#32cd32"/><rect x="872" y="592" width="2" height="30" fill="#32cd32"/><rect x="888" y="599" width="2" height="23" fill="#32cd32"/><rect x="904" y="592" width="2" height="30" fill="#32cd32"/><rect x="920" y="588" width="2" height="34" fill="#32cd32"/><rect x="936" y="592" width="2" height="30" fill="#32cd32"/><rect x="952" y="605" width="2" height="17" fill="#32cd32"/><rect x="968" y="596" width="2" height="26" fill="#32cd32"/><rect x="984" y="598" width="2" height="24" fill="#32cd32"/><rect x="1000" y="593" width="2" height="29" fill="#32cd32"/><rect x="1016" y="594" width="2" height="28" fill="#32cd32"/><rect x="1032" y="593" width="2" height="29" fill="#32cd32"/><rect x="1048" y="593" width="2" height="29" fill="#32cd32"/><rect x="1064" y="598" width="2" height="24" fill="#32cd32"/><rect x="1080" y="590" width="2" height="32" fill="#32cd32"/><rect x="1096" y="601" width="2" height="21" fill="#32cd32"/><rect x="1112" y="598" width="2" height="24" fill="#32cd32"/><rect x="1128" y="599" width="2" height="23" fill="#32cd32"/><rect x="1144" y="598" width="2" height="24" fill="#32cd32"/><rect x="1160" y="589" width="2" height="33" fill="#32cd32"/><rect x="1176" y="590" width="2" height="32" fill="#32cd32"/><rect x="1192" y="597" width="2" height="25" fill="#32cd32"/><rect x="1208" y="598" width="2" height="24" fill="#32cd32"/><rect x="1224" y="602" width="2" height="20" fill="#32cd32"/><rect x="1240" y="603" width="2" height="19" fill="#32cd32"/><rect x="1256" y="608" width="2" height="14" fill="#32cd32"/><rect x="1272" y="607" width="2" height="15" fill="#32cd32"/><rect x="1288" y="605" width="2" height="17" fill="#32cd32"/><rect x="1304" y="602" width="2" height="20" fill="#32cd32"/><rect x="1320" y="599" width="2" height="23" fill="#32cd32"/><rect x="1336" y="598" width="2" height="24" fill="#32cd32"/><rect x="1352" y="597" width="2" height="25" fill="#32cd32"/><rect x="1368" y="596" width="2" height="26" fill="#32cd32"/><rect x="1384" y="587" width="2" height="35" fill="#32cd32"/><rect x="1400" y="595" width="2" height="27" fill="#32cd32"/><rect x="1416" y="597" width="2" height="25" fill="#32cd32"/><rect x="1432" y="596" width="2" height="26" fill="#32cd32"/><rect x="1448" y="601" width="2" height="21" fill="#32cd32"/><rect x="1464" y="603" width="2" height="19" fill="#32cd32"/><rect x="1480" y="599" width="2" height="23" fill="#32cd32"/><rect x="1496" y="606" width="2" height="16" fill="#32cd32"/><rect x="1512" y="608" width="2" height="14" fill="#32cd32"/><rect x="1528" y="613" width="2" height="9" fill="#32cd32"/><rect x="1544" y="608" width="2" height="14" fill="#32cd32"/><rect x="1560" y="601" width="2" height="21" fill="#32cd32"/><rect x="1576" y="604" width="2" height="18" fill="#32cd32"/><rect x="1592" y="589" width="2" height="33" fill="#32cd32"/><rect x="1608" y="577" width="2" height="45" fill="#32cd32"/><rect x="1624" y="586" width="2" height="36" fill="#32cd32"/><rect x="1640" y="590" width="2" height="32" fill="#32cd32"/><rect x="1656" y="597" width="2" height="25" fill="#32cd32"/><rect x="1672" y="600" width="2" height="22" fill="#32cd32"/><rect x="1688" y="593" width="2" height="29" fill="#32cd32"/><rect x="1704" y="594" width="2" height="28" fill="#32cd32"/><rect x="1720" y="590" width="2" height="32" fill="#32cd32"/><rect x="1736" y="602" width="2" height="20" fill="#32cd32"/><rect x="1752" y="597" width="2" height="25" fill="#32cd32"/><rect x="1768" y="596" width="2" height="26" fill="#32cd32"/><rect x="1784" y="606" width="2" height="16" fill="#32cd32"/><rect x="1800" y="605" width="2" height="17" fill="#32cd32"/><rect x="1816" y="600" width="2" height="22" fill="#32cd32"/><rect x="1832" y="607" width="2" height="15" fill="#32cd32"/><rect x="1401" y="382" width="16" height="43" fill="#ffff00"/><rect x="1417" y="388" width="16" height="36" fill="#ffff00"/><rect x="1433" y="380" width="16" height="24" fill="#ffff00"/><rect x="1449" y="338" width="16" height="51" fill="#ffff00"/><rect x="1465" y="345" width="16" height="20" fill="#ffff00"/><rect x="1481" y="351" width="16" height="35" fill="#ffff00"/><rect x="1497" y="346" width="16" height="44" fill="#ffff00"/><rect x="1513" y="338" width="16" height="38" fill="#ffff00"/><rect x="1529" y="341" width="16" height="34" fill="#ffff00"/><rect x="1545" y="332" width="16" height="17" fill="#ffff00"/><path d="M394 365.5 H1859 M394 371.5 H1859" stroke="#2fc82f" stroke-width="1" stroke-dasharray="3 3" stroke-dashoffset="5" fill="none"/><rect x="713" y="191" width="1" height="21" fill="#00ff00"/><rect x="708" y="197" width="11" height="11" fill="#00ff00"/><rect x="709" y="198" width="9" height="9" fill="#fff"/><rect x="729" y="200" width="1" height="43" fill="#00ff00"/><rect x="724" y="206" width="11" height="37" fill="#00ff00"/><rect x="725" y="207" width="9" height="35" fill="#fff"/><rect x="745" y="244" width="1" height="20" fill="#00ff00"/><rect x="740" y="244" width="11" height="10" fill="#00ff00"/><rect x="741" y="245" width="9" height="8" fill="#fff"/><rect x="761" y="246" width="1" height="21" fill="#00ff00"/><rect x="756" y="248" width="11" height="7" fill="#00ff00"/><rect x="757" y="249" width="9" height="5" fill="#000"/><rect x="777" y="220" width="1" height="48" fill="#00ff00"/><rect x="772" y="245" width="11" height="2" fill="#00ff00"/><rect x="793" y="244" width="1" height="56" fill="#00ff00"/><rect x="788" y="244" width="11" height="31" fill="#00ff00"/><rect x="789" y="245" width="9" height="29" fill="#fff"/><rect x="809" y="267" width="1" height="35" fill="#00ff00"/><rect x="804" y="276" width="11" height="5" fill="#00ff00"/><rect x="805" y="277" width="9" height="3" fill="#fff"/><rect x="825" y="257" width="1" height="29" fill="#00ff00"/><rect x="820" y="267" width="11" height="17" fill="#00ff00"/><rect x="821" y="268" width="9" height="15" fill="#000"/><rect x="841" y="220" width="1" height="62" fill="#00ff00"/><rect x="836" y="236" width="11" height="32" fill="#00ff00"/><rect x="837" y="237" width="9" height="30" fill="#000"/><rect x="857" y="222" width="1" height="46" fill="#00ff00"/><rect x="852" y="236" width="11" height="24" fill="#00ff00"/><rect x="853" y="237" width="9" height="22" fill="#fff"/><rect x="873" y="240" width="1" height="35" fill="#00ff00"/><rect x="868" y="258" width="11" height="1" fill="#00ff00"/><rect x="889" y="246" width="1" height="38" fill="#00ff00"/><rect x="884" y="261" width="11" height="23" fill="#00ff00"/><rect x="885" y="262" width="9" height="21" fill="#fff"/><rect x="905" y="245" width="1" height="44" fill="#00ff00"/><rect x="900" y="245" width="11" height="40" fill="#00ff00"/><rect x="901" y="246" width="9" height="38" fill="#000"/><rect x="921" y="223" width="1" height="35" fill="#00ff00"/><rect x="916" y="236" width="11" height="14" fill="#00ff00"/><rect x="917" y="237" width="9" height="12" fill="#000"/><rect x="937" y="219" width="1" height="33" fill="#00ff00"/><rect x="932" y="233" width="11" height="3" fill="#00ff00"/><rect x="933" y="234" width="9" height="1" fill="#000"/><rect x="953" y="229" width="1" height="30" fill="#00ff00"/><rect x="948" y="233" width="11" height="5" fill="#00ff00"/><rect x="949" y="234" width="9" height="3" fill="#fff"/><rect x="969" y="237" width="1" height="72" fill="#00ff00"/><rect x="964" y="237" width="11" height="44" fill="#00ff00"/><rect x="965" y="238" width="9" height="42" fill="#fff"/><rect x="985" y="242" width="1" height="39" fill="#00ff00"/><rect x="980" y="255" width="11" height="26" fill="#00ff00"/><rect x="981" y="256" width="9" height="24" fill="#000"/><rect x="1001" y="239" width="1" height="77" fill="#00ff00"/><rect x="996" y="253" width="11" height="60" fill="#00ff00"/><rect x="997" y="254" width="9" height="58" fill="#fff"/><rect x="1017" y="311" width="1" height="55" fill="#00ff00"/><rect x="1012" y="312" width="11" height="42" fill="#00ff00"/><rect x="1013" y="313" width="9" height="40" fill="#fff"/><rect x="1033" y="329" width="1" height="44" fill="#00ff00"/><rect x="1028" y="345" width="11" height="7" fill="#00ff00"/><rect x="1029" y="346" width="9" height="5" fill="#000"/><rect x="1049" y="321" width="1" height="26" fill="#00ff00"/><rect x="1044" y="340" width="11" height="4" fill="#00ff00"/><rect x="1045" y="341" width="9" height="2" fill="#000"/><rect x="1065" y="311" width="1" height="41" fill="#00ff00"/><rect x="1060" y="328" width="11" height="13" fill="#00ff00"/><rect x="1061" y="329" width="9" height="11" fill="#000"/><rect x="1081" y="303" width="1" height="31" fill="#00ff00"/><rect x="1076" y="311" width="11" height="15" fill="#00ff00"/><rect x="1077" y="312" width="9" height="13" fill="#000"/><rect x="1097" y="293" width="1" height="36" fill="#00ff00"/><rect x="1092" y="307" width="11" height="15" fill="#00ff00"/><rect x="1093" y="308" width="9" height="13" fill="#fff"/><rect x="1113" y="312" width="1" height="40" fill="#00ff00"/><rect x="1108" y="324" width="11" height="28" fill="#00ff00"/><rect x="1109" y="325" width="9" height="26" fill="#fff"/><rect x="1129" y="324" width="1" height="37" fill="#00ff00"/><rect x="1124" y="346" width="11" height="8" fill="#00ff00"/><rect x="1125" y="347" width="9" height="6" fill="#000"/><rect x="1145" y="323" width="1" height="36" fill="#00ff00"/><rect x="1140" y="347" width="11" height="4" fill="#00ff00"/><rect x="1141" y="348" width="9" height="2" fill="#000"/><rect x="1161" y="286" width="1" height="75" fill="#00ff00"/><rect x="1156" y="296" width="11" height="51" fill="#00ff00"/><rect x="1157" y="297" width="9" height="49" fill="#000"/><rect x="1177" y="283" width="1" height="43" fill="#00ff00"/><rect x="1172" y="292" width="11" height="3" fill="#00ff00"/><rect x="1173" y="293" width="9" height="1" fill="#000"/><rect x="1193" y="245" width="1" height="52" fill="#00ff00"/><rect x="1188" y="275" width="11" height="20" fill="#00ff00"/><rect x="1189" y="276" width="9" height="18" fill="#000"/><rect x="1209" y="259" width="1" height="44" fill="#00ff00"/><rect x="1204" y="275" width="11" height="28" fill="#00ff00"/><rect x="1205" y="276" width="9" height="26" fill="#fff"/><rect x="1225" y="294" width="1" height="47" fill="#00ff00"/><rect x="1220" y="301" width="11" height="15" fill="#00ff00"/><rect x="1221" y="302" width="9" height="13" fill="#fff"/><rect x="1241" y="305" width="1" height="37" fill="#00ff00"/><rect x="1236" y="315" width="11" height="27" fill="#00ff00"/><rect x="1237" y="316" width="9" height="25" fill="#fff"/><rect x="1257" y="337" width="1" height="24" fill="#00ff00"/><rect x="1252" y="337" width="11" height="14" fill="#00ff00"/><rect x="1253" y="338" width="9" height="12" fill="#fff"/><rect x="1273" y="342" width="1" height="21" fill="#00ff00"/><rect x="1268" y="350" width="11" height="7" fill="#00ff00"/><rect x="1269" y="351" width="9" height="5" fill="#fff"/><rect x="1289" y="356" width="1" height="22" fill="#00ff00"/><rect x="1284" y="356" width="11" height="20" fill="#00ff00"/><rect x="1285" y="357" width="9" height="18" fill="#fff"/><rect x="1305" y="373" width="1" height="22" fill="#00ff00"/><rect x="1300" y="375" width="11" height="6" fill="#00ff00"/><rect x="1301" y="376" width="9" height="4" fill="#fff"/><rect x="1321" y="367" width="1" height="37" fill="#00ff00"/><rect x="1316" y="380" width="11" height="11" fill="#00ff00"/><rect x="1317" y="381" width="9" height="9" fill="#fff"/><rect x="1337" y="386" width="1" height="30" fill="#00ff00"/><rect x="1332" y="393" width="11" height="21" fill="#00ff00"/><rect x="1333" y="394" width="9" height="19" fill="#fff"/><rect x="1353" y="404" width="1" height="30" fill="#00ff00"/><rect x="1348" y="411" width="11" height="19" fill="#00ff00"/><rect x="1349" y="412" width="9" height="17" fill="#fff"/><rect x="1369" y="393" width="1" height="37" fill="#00ff00"/><rect x="1364" y="399" width="11" height="31" fill="#00ff00"/><rect x="1365" y="400" width="9" height="29" fill="#000"/><rect x="1385" y="378" width="1" height="44" fill="#00ff00"/><rect x="1380" y="385" width="11" height="18" fill="#00ff00"/><rect x="1381" y="386" width="9" height="16" fill="#000"/><rect x="1401" y="384" width="1" height="42" fill="#00ff00"/><rect x="1396" y="384" width="11" height="29" fill="#00ff00"/><rect x="1397" y="385" width="9" height="27" fill="#fff"/><rect x="1417" y="388" width="1" height="36" fill="#00ff00"/><rect x="1412" y="403" width="11" height="14" fill="#00ff00"/><rect x="1413" y="404" width="9" height="12" fill="#000"/><rect x="1433" y="380" width="1" height="25" fill="#00ff00"/><rect x="1428" y="389" width="11" height="14" fill="#00ff00"/><rect x="1429" y="390" width="9" height="12" fill="#000"/><rect x="1449" y="338" width="1" height="52" fill="#00ff00"/><rect x="1444" y="351" width="11" height="39" fill="#00ff00"/><rect x="1445" y="352" width="9" height="37" fill="#000"/><rect x="1465" y="345" width="1" height="21" fill="#00ff00"/><rect x="1460" y="353" width="11" height="12" fill="#00ff00"/><rect x="1461" y="354" width="9" height="10" fill="#fff"/><rect x="1481" y="351" width="1" height="36" fill="#00ff00"/><rect x="1476" y="364" width="11" height="19" fill="#00ff00"/><rect x="1477" y="365" width="9" height="17" fill="#fff"/><rect x="1497" y="346" width="1" height="45" fill="#00ff00"/><rect x="1492" y="351" width="11" height="32" fill="#00ff00"/><rect x="1493" y="352" width="9" height="30" fill="#000"/><rect x="1513" y="338" width="1" height="38" fill="#00ff00"/><rect x="1508" y="350" width="11" height="19" fill="#00ff00"/><rect x="1509" y="351" width="9" height="17" fill="#fff"/><rect x="1529" y="341" width="1" height="35" fill="#00ff00"/><rect x="1524" y="341" width="11" height="32" fill="#00ff00"/><rect x="1525" y="342" width="9" height="30" fill="#000"/><rect x="1545" y="332" width="1" height="18" fill="#00ff00"/><rect x="1540" y="342" width="11" height="4" fill="#00ff00"/><rect x="1541" y="343" width="9" height="2" fill="#fff"/><rect x="1561" y="347" width="1" height="51" fill="#00ff00"/><rect x="1556" y="347" width="11" height="23" fill="#00ff00"/><rect x="1557" y="348" width="9" height="21" fill="#fff"/><rect x="1577" y="367" width="1" height="34" fill="#00ff00"/><rect x="1572" y="367" width="11" height="6" fill="#00ff00"/><rect x="1573" y="368" width="9" height="4" fill="#000"/><rect x="1593" y="311" width="1" height="85" fill="#00ff00"/><rect x="1588" y="354" width="11" height="16" fill="#00ff00"/><rect x="1589" y="355" width="9" height="14" fill="#000"/><rect x="1609" y="356" width="1" height="64" fill="#00ff00"/><rect x="1604" y="358" width="11" height="40" fill="#00ff00"/><rect x="1605" y="359" width="9" height="38" fill="#fff"/><rect x="1625" y="362" width="1" height="54" fill="#00ff00"/><rect x="1620" y="394" width="11" height="17" fill="#00ff00"/><rect x="1621" y="395" width="9" height="15" fill="#fff"/><rect x="1641" y="388" width="1" height="58" fill="#00ff00"/><rect x="1636" y="408" width="11" height="38" fill="#00ff00"/><rect x="1637" y="409" width="9" height="36" fill="#fff"/><rect x="1657" y="441" width="1" height="41" fill="#00ff00"/><rect x="1652" y="441" width="11" height="36" fill="#00ff00"/><rect x="1653" y="442" width="9" height="34" fill="#fff"/><rect x="1673" y="464" width="1" height="23" fill="#00ff00"/><rect x="1668" y="478" width="11" height="2" fill="#00ff00"/><rect x="1689" y="437" width="1" height="51" fill="#00ff00"/><rect x="1684" y="442" width="11" height="40" fill="#00ff00"/><rect x="1685" y="443" width="9" height="38" fill="#000"/><rect x="1705" y="441" width="1" height="52" fill="#00ff00"/><rect x="1700" y="445" width="11" height="46" fill="#00ff00"/><rect x="1701" y="446" width="9" height="44" fill="#fff"/><rect x="1721" y="485" width="1" height="58" fill="#00ff00"/><rect x="1716" y="489" width="11" height="38" fill="#00ff00"/><rect x="1717" y="490" width="9" height="36" fill="#fff"/><rect x="1737" y="502" width="1" height="33" fill="#00ff00"/><rect x="1732" y="503" width="11" height="27" fill="#00ff00"/><rect x="1733" y="504" width="9" height="25" fill="#000"/><rect x="1753" y="503" width="1" height="24" fill="#00ff00"/><rect x="1748" y="503" width="11" height="9" fill="#00ff00"/><rect x="1749" y="504" width="9" height="7" fill="#fff"/><rect x="1769" y="478" width="1" height="39" fill="#00ff00"/><rect x="1764" y="505" width="11" height="4" fill="#00ff00"/><rect x="1765" y="506" width="9" height="2" fill="#000"/><rect x="1785" y="485" width="1" height="27" fill="#00ff00"/><rect x="1780" y="485" width="11" height="21" fill="#00ff00"/><rect x="1781" y="486" width="9" height="19" fill="#000"/><rect x="1801" y="482" width="1" height="24" fill="#00ff00"/><rect x="1796" y="482" width="11" height="14" fill="#00ff00"/><rect x="1797" y="483" width="9" height="12" fill="#fff"/><rect x="1817" y="495" width="1" height="36" fill="#00ff00"/><rect x="1812" y="496" width="11" height="22" fill="#00ff00"/><rect x="1813" y="497" width="9" height="20" fill="#fff"/><rect x="1833" y="517" width="1" height="32" fill="#00ff00"/><rect x="1828" y="517" width="11" height="18" fill="#00ff00"/><rect x="1829" y="518" width="9" height="16" fill="#fff"/><rect x="394" y="74" width="5" height="67" fill="#00ff00"/><rect x="394" y="75" width="4" height="65" fill="#fff"/><rect x="394" y="534" width="1465" height="1" fill="#778899"/><path d="M601 235.5 L1833 536.5" stroke="#e8501e" stroke-width="1" stroke-dasharray="3 3" fill="none"/><path d="M394 376.4 L1705 482.5" stroke="#e8501e" stroke-width="1" stroke-dasharray="3 3" fill="none"/><path d="M397 359.6 L1714 508" stroke="#e8501e" stroke-width="2" stroke-dasharray="3 3" fill="none"/></svg>
<div style="position:absolute;left:1862px;top:529px;width:39px;height:11px;background:#778899;"></div>
<div style="position:absolute;top:530.87px;font-size:10.2px;line-height:10.2px;color:#000;white-space:pre;left:1865.13px;transform:scaleX(0.8667);transform-origin:0 0;">1.16218</div>
<div style="position:absolute;top:58.72px;font-size:9.9px;line-height:9.9px;color:#fff;white-space:pre;left:439.03px;transform:scaleX(0.9677);transform-origin:0 0;">EURUSDm, M1:  Euro vs US Dollar</div>
<div style="position:absolute;top:58.52px;font-size:9.9px;line-height:9.9px;color:#fff;white-space:pre;left:1739.93px;transform:scaleX(0.9697);transform-origin:0 0;">Smart money forex pro</div>
<div style="position:absolute;top:354.97px;font-size:8.9px;line-height:8.9px;color:#fff;white-space:pre;left:398.9px;transform:scaleX(1.0282);transform-origin:0 0;">SELL 0.05 at 1.16348</div>
<div style="position:absolute;top:361.57px;font-size:8.9px;line-height:8.9px;color:#fff;white-space:pre;left:398.9px;transform:scaleX(1.0282);transform-origin:0 0;">SELL 0.05 at 1.16344</div>
</div>
<div style="position:absolute;left:405px;top:74px;width:298px;height:268px;background:#181826;"></div>
<div style="position:absolute;top:79.77px;font-size:10.67px;line-height:10.67px;color:#fff;white-space:pre;letter-spacing:0.1px;left:413.2px;">Multi-Strategy Dashboard v3.0</div>
<div style="position:absolute;top:99.97px;font-size:10.67px;line-height:10.67px;color:#fff;white-space:pre;left:414px;">Strategy</div>
<div style="position:absolute;top:99.97px;font-size:10.67px;line-height:10.67px;color:#fff;white-space:pre;left:544px;">Trades</div>
<div style="position:absolute;top:99.97px;font-size:10.67px;line-height:10.67px;color:#fff;white-space:pre;left:604px;">Profit ($)</div>
<div style="position:absolute;top:119.77px;font-size:10.67px;line-height:10.67px;color:#fff;white-space:pre;left:414px;">SmartMoney</div>
<div style="position:absolute;top:119.77px;font-size:10.67px;line-height:10.67px;color:#fff;white-space:pre;left:554px;">1</div>
<div style="position:absolute;top:119.77px;font-size:10.67px;line-height:10.67px;color:#00f000;white-space:pre;left:624px;">6.20</div>
<div style="position:absolute;top:134.77px;font-size:10.67px;line-height:10.67px;color:#fff;white-space:pre;left:414px;">TrendFollow</div>
<div style="position:absolute;top:134.77px;font-size:10.67px;line-height:10.67px;color:#fff;white-space:pre;left:554px;">1</div>
<div style="position:absolute;top:134.77px;font-size:10.67px;line-height:10.67px;color:#00f000;white-space:pre;left:624px;">6.20</div>
<div style="position:absolute;top:149.77px;font-size:10.67px;line-height:10.67px;color:#fff;white-space:pre;left:414px;">Scalping</div>
<div style="position:absolute;top:149.77px;font-size:10.67px;line-height:10.67px;color:#fff;white-space:pre;left:554px;">0</div>
<div style="position:absolute;top:149.77px;font-size:10.67px;line-height:10.67px;color:#fff;white-space:pre;left:624px;">0.00</div>
<div style="position:absolute;top:164.77px;font-size:10.67px;line-height:10.67px;color:#fff;white-space:pre;left:414px;">Breakout</div>
<div style="position:absolute;top:164.77px;font-size:10.67px;line-height:10.67px;color:#fff;white-space:pre;left:554px;">0</div>
<div style="position:absolute;top:164.77px;font-size:10.67px;line-height:10.67px;color:#fff;white-space:pre;left:624px;">0.00</div>
<div style="position:absolute;top:179.77px;font-size:10.67px;line-height:10.67px;color:#fff;white-space:pre;left:414px;">MeanReversion</div>
<div style="position:absolute;top:179.77px;font-size:10.67px;line-height:10.67px;color:#fff;white-space:pre;left:554px;">0</div>
<div style="position:absolute;top:179.77px;font-size:10.67px;line-height:10.67px;color:#fff;white-space:pre;left:624px;">0.00</div>
<div style="position:absolute;top:194.77px;font-size:10.67px;line-height:10.67px;color:#fff;white-space:pre;left:414px;">Momentum</div>
<div style="position:absolute;top:194.77px;font-size:10.67px;line-height:10.67px;color:#fff;white-space:pre;left:554px;">1</div>
<div style="position:absolute;top:194.77px;font-size:10.67px;line-height:10.67px;color:#00f000;white-space:pre;left:624px;">6.00</div>
<div style="position:absolute;top:209.77px;font-size:10.67px;line-height:10.67px;color:#fff;white-space:pre;left:414px;">MACross</div>
<div style="position:absolute;top:209.77px;font-size:10.67px;line-height:10.67px;color:#fff;white-space:pre;left:554px;">0</div>
<div style="position:absolute;top:209.77px;font-size:10.67px;line-height:10.67px;color:#fff;white-space:pre;left:624px;">0.00</div>
<div style="position:absolute;top:224.77px;font-size:10.67px;line-height:10.67px;color:#fff;white-space:pre;left:414px;">Ichimoku</div>
<div style="position:absolute;top:224.77px;font-size:10.67px;line-height:10.67px;color:#fff;white-space:pre;left:554px;">0</div>
<div style="position:absolute;top:224.77px;font-size:10.67px;line-height:10.67px;color:#fff;white-space:pre;left:624px;">0.00</div>
<div style="position:absolute;top:239.77px;font-size:10.67px;line-height:10.67px;color:#fff;white-space:pre;left:414px;">Volatility</div>
<div style="position:absolute;top:239.77px;font-size:10.67px;line-height:10.67px;color:#fff;white-space:pre;left:554px;">0</div>
<div style="position:absolute;top:239.77px;font-size:10.67px;line-height:10.67px;color:#fff;white-space:pre;left:624px;">0.00</div>
<div style="position:absolute;top:254.77px;font-size:10.67px;line-height:10.67px;color:#fff;white-space:pre;left:414px;">Range</div>
<div style="position:absolute;top:254.77px;font-size:10.67px;line-height:10.67px;color:#fff;white-space:pre;left:554px;">0</div>
<div style="position:absolute;top:254.77px;font-size:10.67px;line-height:10.67px;color:#fff;white-space:pre;left:624px;">0.00</div>
<div style="position:absolute;top:269.77px;font-size:10.67px;line-height:10.67px;color:#fff;white-space:pre;left:414px;">AIPrediction</div>
<div style="position:absolute;top:269.77px;font-size:10.67px;line-height:10.67px;color:#fff;white-space:pre;left:554px;">0</div>
<div style="position:absolute;top:269.77px;font-size:10.67px;line-height:10.67px;color:#fff;white-space:pre;left:624px;">0.00</div>
<div style="position:absolute;top:294.77px;font-size:10.67px;line-height:10.67px;color:#fff;white-space:pre;left:414px;">Total Trades: 3</div>
<div style="position:absolute;top:309.77px;font-size:10.67px;line-height:10.67px;color:#00f000;white-space:pre;left:414px;">Total P/L: 18.40</div>
<div style="position:absolute;top:324.77px;font-size:10.67px;line-height:10.67px;color:#00f000;white-space:pre;left:414px;">Daily P/L: 212.83</div>
<svg style="left:0;top:0" width="1919" height="866" viewBox="0 0 1919 866" shape-rendering="crispEdges"><path d="M601 235.5 L703 260.42" stroke="#e8501e" stroke-width="1" stroke-dasharray="3 3" fill="none"/><path d="M599 227.5 H604 V229.5 H606 V231 L601.5 235.5 L597 231 V229.5 H599 Z" fill="#e8451a" stroke="#fff" stroke-width="1" shape-rendering="auto"/><path d="M1705.5 484 L1709.5 488 H1707.5 V491 H1703.5 V488 H1701.5 Z" fill="#1a5cb8" shape-rendering="auto"/><path d="M1721.5 510.5 L1725.5 514.5 H1723.5 V517.5 H1719.5 V514.5 H1717.5 Z" fill="#1a5cb8" shape-rendering="auto"/><path d="M1833.5 538 L1837.5 542 H1835.5 V545 H1831.5 V542 H1829.5 Z" fill="#1a5cb8" stroke="#fff" stroke-width="1.6" stroke-linejoin="miter" shape-rendering="auto"/><path d="M1833.5 538 L1837.5 542 H1835.5 V545 H1831.5 V542 H1829.5 Z" fill="#1a5cb8" shape-rendering="auto"/><path d="M1559.5 358 H1563.5 V360 H1565.5 L1561.5 364 L1557.5 360 H1559.5 Z" fill="#e0301a" shape-rendering="auto"/><path d="M1559.5 364 H1563.5 V366 H1565.5 L1561.5 370 L1557.5 366 H1559.5 Z" fill="#e0301a" shape-rendering="auto"/></svg>
<svg style="left:0;top:0" width="1919" height="866" viewBox="0 0 1919 866"><rect x="9" y="21" width="2" height="2" fill="#e6e6e6" shape-rendering="crispEdges"/><rect x="9" y="25" width="2" height="2" fill="#e6e6e6" shape-rendering="crispEdges"/><rect x="9" y="29" width="2" height="2" fill="#e6e6e6" shape-rendering="crispEdges"/><rect x="9" y="33" width="2" height="2" fill="#e6e6e6" shape-rendering="crispEdges"/><rect x="9" y="37" width="2" height="2" fill="#e6e6e6" shape-rendering="crispEdges"/><rect x="9" y="41" width="2" height="2" fill="#e6e6e6" shape-rendering="crispEdges"/><rect x="9" y="45" width="2" height="2" fill="#e6e6e6" shape-rendering="crispEdges"/><rect x="9" y="49" width="2" height="2" fill="#e6e6e6" shape-rendering="crispEdges"/><rect x="810" y="21" width="2" height="2" fill="#e6e6e6" shape-rendering="crispEdges"/><rect x="810" y="25" width="2" height="2" fill="#e6e6e6" shape-rendering="crispEdges"/><rect x="810" y="29" width="2" height="2" fill="#e6e6e6" shape-rendering="crispEdges"/><rect x="810" y="33" width="2" height="2" fill="#e6e6e6" shape-rendering="crispEdges"/><rect x="810" y="37" width="2" height="2" fill="#e6e6e6" shape-rendering="crispEdges"/><rect x="810" y="41" width="2" height="2" fill="#e6e6e6" shape-rendering="crispEdges"/><rect x="810" y="45" width="2" height="2" fill="#e6e6e6" shape-rendering="crispEdges"/><rect x="810" y="49" width="2" height="2" fill="#e6e6e6" shape-rendering="crispEdges"/><rect x="1120" y="21" width="2" height="2" fill="#e6e6e6" shape-rendering="crispEdges"/><rect x="1120" y="25" width="2" height="2" fill="#e6e6e6" shape-rendering="crispEdges"/><rect x="1120" y="29" width="2" height="2" fill="#e6e6e6" shape-rendering="crispEdges"/><rect x="1120" y="33" width="2" height="2" fill="#e6e6e6" shape-rendering="crispEdges"/><rect x="1120" y="37" width="2" height="2" fill="#e6e6e6" shape-rendering="crispEdges"/><rect x="1120" y="41" width="2" height="2" fill="#e6e6e6" shape-rendering="crispEdges"/><rect x="1120" y="45" width="2" height="2" fill="#e6e6e6" shape-rendering="crispEdges"/><rect x="1120" y="49" width="2" height="2" fill="#e6e6e6" shape-rendering="crispEdges"/><rect x="132" y="23" width="1" height="25" fill="#7a7a7a" shape-rendering="crispEdges"/><rect x="298" y="23" width="1" height="25" fill="#7a7a7a" shape-rendering="crispEdges"/><rect x="500" y="23" width="1" height="25" fill="#7a7a7a" shape-rendering="crispEdges"/><rect x="602" y="23" width="1" height="25" fill="#7a7a7a" shape-rendering="crispEdges"/><rect x="704" y="23" width="1" height="25" fill="#7a7a7a" shape-rendering="crispEdges"/><rect x="774" y="23" width="1" height="25" fill="#7a7a7a" shape-rendering="crispEdges"/><rect x="883" y="23" width="1" height="25" fill="#7a7a7a" shape-rendering="crispEdges"/><rect x="302.5" y="22.5" width="100" height="26" fill="#005096" stroke="#f0f0f0" stroke-width="1"/><rect x="536.5" y="22.5" width="29" height="26" fill="#005096" stroke="#f0f0f0" stroke-width="1"/><rect x="708.5" y="22.5" width="29" height="26" fill="#005096" stroke="#f0f0f0" stroke-width="1"/><rect x="817.5" y="22.5" width="29" height="26" fill="#005096" stroke="#f0f0f0" stroke-width="1"/><rect x="1127.5" y="22.5" width="29" height="26" fill="#005096" stroke="#f0f0f0" stroke-width="1"/><path d="M21.5 27 V43.5 H38" fill="none" stroke="#cfcfcf" stroke-width="1.2"/><path d="M24 35 L27.5 32 L32 36.6 L38 32" fill="none" stroke="#2f86f5" stroke-width="1.3"/><path d="M44 35 H51.5 L47.75 39 Z" fill="#d8d8d8"/><rect x="61.7" y="26.7" width="17.6" height="15" rx="2.4" fill="#222a33" stroke="#2f86f5" stroke-width="1.3"/><path d="M66 44.4 H75" fill="none" stroke="#2f86f5" stroke-width="1.3"/><path d="M63.8 33.3 L68 30.4 L71.7 32 L76.7 29.2" fill="none" stroke="#2f86f5" stroke-width="1"/><path d="M64.3 38.2 V36.3 M67.5 38.2 V35 M70.5 38.2 V36.3 M73.4 38.2 V35.4 M76.6 38.2 V33.8" fill="none" stroke="#1fd18b" stroke-width="1.1"/><path d="M85 35 H92.5 L88.75 39 Z" fill="#d8d8d8"/><rect x="105.7" y="27.7" width="15.8" height="15.8" rx="2.3" fill="#3a2a0c" stroke="#d9861a" stroke-width="1.3"/><path d="M178 32 H189 L190.6 43.6 H176.4 Z" fill="#40300a" stroke="#e0901c" stroke-width="1.3" stroke-linejoin="round"/><path d="M179.6 34 V30 a1.9 2.6 0 0 1 3.8 0 V34 M183.6 34 V30 a1.9 2.6 0 0 1 3.8 0 V34" fill="none" stroke="#e0901c" stroke-width="1.1"/><circle cx="215.4" cy="35.5" r="2" fill="none" stroke="#636363" stroke-width="1.2"/><path d="M212 31.75 a5 5 0 0 0 0 7.5 M219 31.75 a5 5 0 0 1 0 7.5 M209.6 30.1 a8 8 0 0 0 0 10.8 M221.4 30.1 a8 8 0 0 1 0 10.8" fill="none" stroke="#636363" stroke-width="1.2"/><path d="M243.2 39 a3.6 3.6 0 0 1 -0.4 -7.1 a4.9 4.9 0 0 1 9.4 -0.9 a3.9 3.9 0 0 1 -0.2 8 Z" fill="#04284a" stroke="#2f86f5" stroke-width="1.3"/><path d="M239.3 41.6 H255.8 M247.5 39 V41" fill="none" stroke="#2f86f5" stroke-width="1.3"/><circle cx="247.5" cy="41.6" r="1.1" fill="#2f86f5"/><circle cx="279.3" cy="35.1" r="2.6" fill="none" stroke="#2f86f5" stroke-width="1.3"/><path d="M279.3 40.6 A5.5 5.5 0 1 1 284.8 35.1 M279.3 43.6 A8.5 8.5 0 1 1 287.8 35.1" fill="none" stroke="#2f86f5" stroke-width="1.3"/><circle cx="283.5" cy="39.7" r="5" fill="#0a4a2a" stroke="#16c784" stroke-width="1.2"/><path d="M283.5 36.7 V42.7 M280.5 39.7 H286.5" stroke="#16c784" stroke-width="1.3"/><path d="M310.9 30.6 V40.4 L320.6 35.5 Z" fill="#1e3a24" stroke="#16c784" stroke-width="1.2" stroke-linejoin="round"/><path d="M414.3 27.4 H422.3 a2.2 2.2 0 0 1 2.2 2.2 V39 L420 43.3 H414.3 a2.2 2.2 0 0 1 -2.2 -2.2 V29.6 a2.2 2.2 0 0 1 2.2 -2.2 Z" fill="none" stroke="#2f86f5" stroke-width="1.3"/><path d="M424.5 39.2 L420.3 43.3 V40.6 a1.3 1.3 0 0 1 1.3 -1.4 Z" fill="#2f86f5"/><path d="M418.3 31.2 V38.2 M414.8 34.7 H421.8" fill="none" stroke="#2f86f5" stroke-width="1.3"/><path d="M514.4 31.3 V43.8 M510.8 40.5 H514.4 M514.4 34.4 H518 M524.4 27 V39.8 M521 30.5 H524.4 M524.4 36.3 H528" fill="none" stroke="#1fd18b" stroke-width="1.3"/><path d="M547.4 28 V42.6 M555.5 27 V43.8" fill="none" stroke="#1fd18b" stroke-width="1.3"/><rect x="545.2" y="30.2" width="4.4" height="10.2" fill="#27381c" stroke="#20e090" stroke-width="1.2"/><rect x="553.2" y="29.4" width="4.6" height="12" fill="#27381c" stroke="#20e090" stroke-width="1.2"/><path d="M575 38.4 H577 L580 32.6 L583.3 40.5 L587.5 30.5 L590 35.5 H591.8" fill="none" stroke="#1fd18b" stroke-width="1.3" stroke-linejoin="round"/><circle cx="619.4" cy="33.6" r="6.2" fill="#04284a" stroke="#2f86f5" stroke-width="1.3"/><path d="M623.9 38.2 L629.8 43.8 M616.1999999999999 33.6 H622.6 M619.4 30.4 V36.8" fill="none" stroke="#2f86f5" stroke-width="1.3"/><circle cx="651.4" cy="33.6" r="6.2" fill="#04284a" stroke="#2f86f5" stroke-width="1.3"/><path d="M655.9 38.2 L661.8 43.8 M648.1999999999999 33.6 H654.6" fill="none" stroke="#2f86f5" stroke-width="1.3"/><rect x="677.6" y="27.6" width="16" height="16" rx="2.2" fill="#04284a" stroke="#2f86f5" stroke-width="1.3"/><path d="M685.6 27.6 V43.6 M677.6 35.6 H693.6" fill="none" stroke="#2f86f5" stroke-width="1.3"/><path d="M715.4 28.8 V39.8" fill="none" stroke="#1fd18b" stroke-width="1"/><rect x="714.35" y="30.6" width="2.1" height="7.399999999999999" fill="#27381c" stroke="#20e090" stroke-width="1"/><path d="M719.4 28 V40.9" fill="none" stroke="#1fd18b" stroke-width="1"/><rect x="718.35" y="29.8" width="2.1" height="8.999999999999996" fill="#27381c" stroke="#20e090" stroke-width="1"/><path d="M723 34.4 H729.6 M726.6 31.4 L729.6 34.4 L726.6 37.4" fill="none" stroke="#1fd18b" stroke-width="1.3"/><path d="M732.5 27 V42" fill="none" stroke="#2f86f5" stroke-width="1.3"/><path d="M714 44.5 H733" stroke="#c2b9a8" stroke-width="1"/><path d="M747.5 28.8 V39.8" fill="none" stroke="#1fd18b" stroke-width="1"/><rect x="746.45" y="30.6" width="2.1" height="7.399999999999999" fill="#27381c" stroke="#20e090" stroke-width="1"/><path d="M751.5 28 V40.9" fill="none" stroke="#1fd18b" stroke-width="1"/><rect x="750.45" y="29.8" width="2.1" height="8.999999999999996" fill="#27381c" stroke="#20e090" stroke-width="1"/><path d="M755.5 27 V42 M758.5 34.4 H765 M761.5 31.4 L758.5 34.4 L761.5 37.4" fill="none" stroke="#2f86f5" stroke-width="1.3"/><path d="M746 44.5 H765" stroke="#c2b9a8" stroke-width="1"/><path d="M788 44.2 H786.8 a2.4 2.4 0 0 1 -2.4 -2.4 V29.2 a2.4 2.4 0 0 1 2.4 -2.4 H800.2 a2.4 2.4 0 0 1 2.4 2.4 V33" fill="none" stroke="#2f86f5" stroke-width="1.3" stroke-dasharray="2.6 2.2"/><path d="M790.8 44.2 a1.4 1.4 0 0 1 -1.4 -1.4 V37 a1.4 1.4 0 0 1 1.4 -1.4 H792.3 L793.4 34 H798.4 L799.5 35.6 H801.2 a1.4 1.4 0 0 1 1.4 1.4 V42.8 a1.4 1.4 0 0 1 -1.4 1.4 Z" fill="#04284a" stroke="#2f86f5" stroke-width="1.3"/><circle cx="795.9" cy="39.6" r="2" fill="none" stroke="#2f86f5" stroke-width="1.3"/><path d="M826.3 29.6 L838.6 33.9 L835 36.6 L838.8 40.4 L837 42 L833.3 38.2 L830.5 41.4 Z" fill="#04284a" stroke="#2f86f5" stroke-width="1.3" stroke-linejoin="round"/><path d="M856 35.5 H873 M864.4 26.8 V44" fill="none" stroke="#2f86f5" stroke-width="1.3"/><circle cx="864.4" cy="35.5" r="2.2" fill="#04284a" stroke="#2f86f5" stroke-width="1.2"/><path d="M902.4 26 V44.8" fill="none" stroke="#2f86f5" stroke-width="1.3"/><circle cx="902.4" cy="35.5" r="2.2" fill="#04284a" stroke="#2f86f5" stroke-width="1.3"/><path d="M925 35.5 H943.8" fill="none" stroke="#2f86f5" stroke-width="1.3"/><circle cx="934.6" cy="35.5" r="2.2" fill="#04284a" stroke="#2f86f5" stroke-width="1.3"/><path d="M959.3 42.6 L973.5 28.4" fill="none" stroke="#2f86f5" stroke-width="1.3"/><circle cx="959.3" cy="42.6" r="2.2" fill="#04284a" stroke="#2f86f5" stroke-width="1.3"/><circle cx="973.5" cy="28.4" r="2.2" fill="#04284a" stroke="#2f86f5" stroke-width="1.3"/><path d="M991.4 36.5 L999.4 28.4 M997.5 42.6 L1007.8 32.2" fill="none" stroke="#2f86f5" stroke-width="1.3"/><circle cx="991.4" cy="36.5" r="2.2" fill="#04284a" stroke="#2f86f5" stroke-width="1.3"/><circle cx="999.4" cy="28.4" r="2.2" fill="#04284a" stroke="#2f86f5" stroke-width="1.3"/><circle cx="997.5" cy="42.6" r="2.2" fill="#04284a" stroke="#2f86f5" stroke-width="1.3"/><path d="M1021 27.6 H1039.8 M1021 32.6 H1037.5 M1021.6 37.6 H1039.8 M1023.3 42.6 H1039.8" fill="none" stroke="#2f86f5" stroke-width="1.3"/><circle cx="1037.5" cy="32.6" r="2.2" fill="#04284a" stroke="#2f86f5" stroke-width="1.3"/><circle cx="1023.3" cy="42.6" r="2.2" fill="#04284a" stroke="#2f86f5" stroke-width="1.3"/><path d="M1055.8 29.4 H1069 M1062.5 29.4 V42.2" fill="none" stroke="#2f86f5" stroke-width="1.3"/><path d="M1087.9 27.8 L1084.3 33.6 H1091.6 Z" fill="#04284a" stroke="#2f86f5" stroke-width="1.2" stroke-linejoin="round"/><circle cx="1097.5" cy="30.5" r="3.2" fill="#04284a" stroke="#2f86f5" stroke-width="1.2"/><path d="M1088 36.9 L1091.6 39.5 L1090.2 43.6 H1085.8 L1084.4 39.5 Z" fill="#04284a" stroke="#2f86f5" stroke-width="1.2" stroke-linejoin="round"/><rect x="1094.4" y="37.5" width="6.2" height="6.2" rx="1" fill="#04284a" stroke="#2f86f5" stroke-width="1.2"/><path d="M1106.7 35 H1114.2 L1110.45 39 Z" fill="#d8d8d8"/><circle cx="1778.6" cy="34.4" r="5.3" fill="none" stroke="#d4d4d4" stroke-width="1.2"/><path d="M1782.4 38.3 L1786 42" fill="none" stroke="#d4d4d4" stroke-width="1.2"/><circle cx="1809.8" cy="35.3" r="6" fill="none" stroke="#d4d4d4" stroke-width="1.2"/><circle cx="1809.8" cy="33.3" r="2.2" fill="none" stroke="#d4d4d4" stroke-width="1.2"/><path d="M1805.6 39.6 a4.6 3.4 0 0 1 8.4 0" fill="none" stroke="#d4d4d4" stroke-width="1.2"/><circle cx="1817.6" cy="31.7" r="7.4" fill="#e23a20"/><path d="M1847.5 27.6 L1851.6 31.8 H1849.4 V35.6 H1845.6 V31.8 H1843.4 Z" fill="none" stroke="#12c98a" stroke-width="1.1" stroke-linejoin="round"/><rect x="1863.5" y="29.5" width="41" height="14" fill="none" stroke="#8c8c8c" stroke-width="1"/><rect x="1864" y="30" width="13" height="13" fill="#15883a"/><path d="M1860 12.5 H1869" stroke="#f0f0f0" stroke-width="1"/><path d="M1883.5 7 V3.5 H1889.5 V9.5 H1885" fill="none" stroke="#f0f0f0" stroke-width="1"/><rect x="1878.5" y="7.5" width="6" height="6" fill="#3a3a3a" stroke="#b4b4b4" stroke-width="1.2"/><path d="M1898.3 4 L1907 13 M1907 4 L1898.3 13" stroke="#f0f0f0" stroke-width="1.1"/><path d="M18.5 1.5 V15 M24.5 0.8 V15.8" stroke="#16e09a" stroke-width="1.2"/><rect x="16.6" y="3.6" width="3.8" height="8.6" fill="#17301f" stroke="#16e09a" stroke-width="1.2"/><rect x="22.6" y="2.6" width="3.8" height="10.4" fill="#17301f" stroke="#16e09a" stroke-width="1.2"/><path d="M373 56.5 L380.5 63.5 M380.5 56.5 L373 63.5" stroke="#f4f4f4" stroke-width="1.4"/><rect x="398.6" y="58.6" width="14" height="10" rx="1.5" fill="#141414" stroke="#2a85ff" stroke-width="1.2"/><path d="M405.5 58.6 H400.1 a1.5 1.5 0 0 0 -1.5 1.5 V67.1 a1.5 1.5 0 0 0 1.5 1.5 H405.5" fill="#141414" stroke="#ff5050" stroke-width="1.2"/><path d="M400.6 61 H405 M400.6 63.6 H405 M400.6 66.2 H405" stroke="#ff5050" stroke-width="1.1"/><path d="M406.2 61 H410.8 M406.2 63.6 H410.8 M406.2 66.2 H410.8" stroke="#2a85ff" stroke-width="1.1"/><path d="M419.6 58.6 H422.2 V63.6 H425.2 V68.6 H419.6 Z" fill="#4a2214" stroke="#ff5050" stroke-width="1.2" stroke-linejoin="round"/><path d="M431 58.6 H433.6 V68.6 H427.6 V63.6 H431 Z" fill="#04284a" stroke="#2a85ff" stroke-width="1.2" stroke-linejoin="round"/><rect x="424.4" y="58.4" width="4" height="2" rx="1" fill="none" stroke="#c8c8c8" stroke-width="0.9"/><path d="M1848.5 58.8 L1856 61.8 L1848.5 64.8 L1841 61.8 Z" fill="#04284a" stroke="#2a85ff" stroke-width="1.1" stroke-linejoin="round"/><path d="M1844.2 63.6 V66.6 q4.3 2.4 8.6 0 V63.6" fill="#04284a" stroke="#2a85ff" stroke-width="1.1"/><path d="M1842 62.3 V68" stroke="#2a85ff" stroke-width="1"/><circle cx="1842" cy="69" r="1" fill="#2a85ff"/></svg>
<div style="position:absolute;top:28.53px;font-size:14.5px;line-height:14.5px;color:#e8921c;white-space:pre;left:13.599999999999994px;width:200px;text-align:center;">$</div>
<div style="position:absolute;left:143px;top:28.5px;font-size:13.5px;line-height:14px;color:#2f86f5;transform:scaleX(0.78);transform-origin:0 0;letter-spacing:0.2px">IDE</div>
<div style="position:absolute;top:30.94px;font-size:12px;line-height:12px;color:#f2f2f2;white-space:pre;letter-spacing:-0.064px;left:330.4px;">Algo Trading</div>
<div style="position:absolute;top:30.94px;font-size:12px;line-height:12px;color:#e8e8e8;white-space:pre;letter-spacing:-0.031px;left:431.5px;">New Order</div>
<div style="position:absolute;top:30.24px;font-size:12px;line-height:12px;color:#3c92f8;white-space:pre;left:1133.6px;">M1</div>
<div style="position:absolute;top:30.24px;font-size:12px;line-height:12px;color:#3c92f8;white-space:pre;letter-spacing:0.7px;left:1165.75px;">M5</div>
<div style="position:absolute;top:30.24px;font-size:12px;line-height:12px;color:#3c92f8;white-space:pre;letter-spacing:-0.1px;left:1194.7px;">M15</div>
<div style="position:absolute;top:30.24px;font-size:12px;line-height:12px;color:#3c92f8;white-space:pre;letter-spacing:0.5px;left:1226.0px;">M30</div>
<div style="position:absolute;top:30.24px;font-size:12px;line-height:12px;color:#3c92f8;white-space:pre;letter-spacing:0.25px;left:1262.25px;">H1</div>
<div style="position:absolute;top:30.24px;font-size:12px;line-height:12px;color:#3c92f8;white-space:pre;left:1294.5px;">H4</div>
<div style="position:absolute;top:30.24px;font-size:12px;line-height:12px;color:#3c92f8;white-space:pre;letter-spacing:-0.25px;left:1326.5px;">D1</div>
<div style="position:absolute;top:30.24px;font-size:12px;line-height:12px;color:#3c92f8;white-space:pre;letter-spacing:-1.25px;left:1357.5px;">W1</div>
<div style="position:absolute;top:30.24px;font-size:12px;line-height:12px;color:#3c92f8;white-space:pre;letter-spacing:0.7px;left:1388.78px;">MN</div>
<div style="position:absolute;top:26.69px;font-size:11px;line-height:11px;color:#fff;white-space:pre;left:1717.4px;width:200px;text-align:center;">1</div>
<div style="position:absolute;top:36.95px;font-size:7.5px;line-height:7.5px;color:#12c98a;white-space:pre;letter-spacing:-0.2px;left:1747.6px;width:200px;text-align:center;">LVL</div>
</body></html>
